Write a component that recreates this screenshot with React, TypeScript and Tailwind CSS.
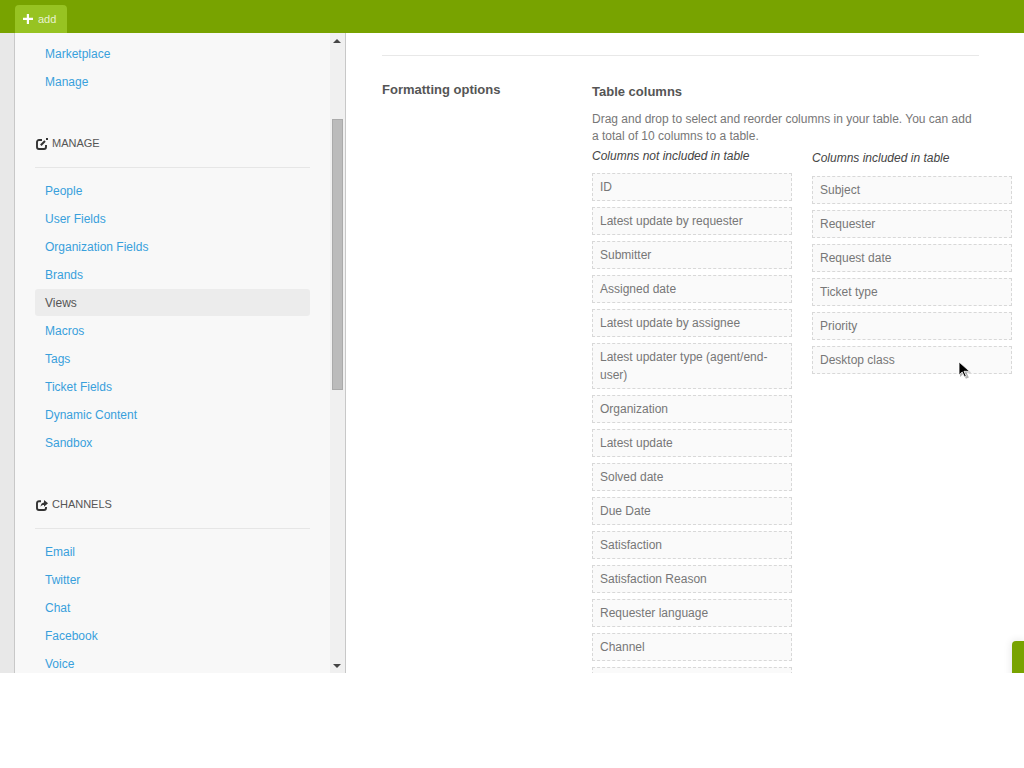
const adminLinks = ['Marketplace', 'Manage']
const manageLinks = ['People', 'User Fields', 'Organization Fields', 'Brands', 'Views', 'Macros', 'Tags', 'Ticket Fields', 'Dynamic Content', 'Sandbox']
const channelLinks = ['Email', 'Twitter', 'Chat', 'Facebook', 'Voice']

const available = [
	'ID',
	'Latest update by requester',
	'Submitter',
	'Assigned date',
	'Latest update by assignee',
	'Latest updater type (agent/end-user)',
	'Organization',
	'Latest update',
	'Solved date',
	'Due Date',
	'Satisfaction',
	'Satisfaction Reason',
	'Requester language',
	'Channel',
]
const selected = ['Subject', 'Requester', 'Request date', 'Ticket type', 'Priority', 'Desktop class']

const NavList = ({ items }: { items: string[] }) => (
	<ul className="ml-5 w-[275px]">
		{items.map((item) =>
			item === 'Views' ? (
				<li key={item} className="flex h-7 items-start">
					<span className="flex h-[27px] w-full items-center rounded-[3px] bg-[#ececec] pl-2.5 pt-[1px] text-[#555]">{item}</span>
				</li>
			) : (
				<li key={item} className="flex h-7 items-center pl-2.5 text-[#38a0dc]">
					{item}
				</li>
			),
		)}
	</ul>
)

const ColumnItem = ({ label }: { label: string }) => (
	<li className="w-[200px] border border-dashed border-[#d8d8d8] bg-[#fafafa] px-[7px] py-[4px] leading-[18px] text-[#777]">{label}</li>
)

const EditIcon = () => (
	<svg className="mr-[4px] mt-[2px]" width="12" height="12" viewBox="0 0 12 12" fill="none">
		<path d="M6 2H3a2 2 0 0 0-2 2v5a2 2 0 0 0 2 2h5a2 2 0 0 0 2-2V7" stroke="#333" strokeWidth="1.9" />
		<path d="M4.8 7.2 9 3" stroke="#333" strokeWidth="2" />
		<rect x="10" y="0" width="2" height="2" fill="#333" />
	</svg>
)

const ShareIcon = () => (
	<svg className="mr-[4px] mt-[2px]" width="12" height="12" viewBox="0 0 12 12" fill="none">
		<path d="M5 2.2H3a2 2 0 0 0-2 2V9a2 2 0 0 0 2 2h5a2 2 0 0 0 2-2V8" stroke="#333" strokeWidth="1.9" />
		<path d="M8 1l4 3.3L8 7.8V6C6.2 6 5.2 6.6 4.6 8c0-3 1.3-4.4 3.4-4.6z" fill="#333" />
	</svg>
)

export default function App() {
	return (
		<div className="relative h-[673px] overflow-hidden bg-white font-['Liberation_Sans',sans-serif] text-xs">
			<header className="flex h-[33px] items-end bg-[#78a300] pl-[15px]">
				<div className="flex h-7 w-[52px] items-center rounded-t-[4px] bg-[#97c322] pl-2 text-[11px] text-[#e8f2cf]">
					<svg className="mr-[5px]" width="10" height="10" viewBox="0 0 11 11">
						<path d="M4.2 0h2.4v4.2H11v2.4H6.6V11H4.2V6.6H0V4.2h4.2z" fill="#fff" />
					</svg>
					add
				</div>
			</header>

			<div className="flex h-[640px]">
				<aside className="flex w-[346px] shrink-0 border-r border-[#c8c8c8] bg-[#e8e8e8] pl-[14px]">
					<div className="h-full w-[316px] border-l border-[#c8c8c8] bg-[#f8f8f8] pt-[7px]">
						<NavList items={adminLinks} />
						<div className="mt-10 ml-[21px] flex h-[14px] items-center text-[11px] text-[#555]">
							<EditIcon />
							MANAGE
						</div>
						<div className="mt-[17px] mb-[9px] ml-5 h-px w-[275px] bg-[#e6e6e6]" />
						<NavList items={manageLinks} />
						<div className="mt-10 ml-[21px] flex h-[14px] items-center text-[11px] text-[#555]">
							<ShareIcon />
							CHANNELS
						</div>
						<div className="mt-[17px] mb-[9px] ml-5 h-px w-[275px] bg-[#e6e6e6]" />
						<NavList items={channelLinks} />
					</div>
					<div className="flex h-full w-[15px] flex-col items-center bg-[#f0f0f0]">
						<div className="mt-[6px] -ml-px h-0 w-0 border-x-[4px] border-b-[4px] border-x-transparent border-b-[#444]" />
						<div className="mt-[76px] h-[271px] w-[11px] border border-[#aaa] bg-[#bbb]" />
						<div className="mt-[274px] -ml-px h-0 w-0 border-x-[4px] border-t-[4px] border-x-transparent border-t-[#444]" />
					</div>
				</aside>

				<main className="min-w-0 flex-1 pl-9 text-[#777]">
					<div className="mt-[22px] h-px w-[597px] bg-[#e8e8e8]" />
					<div className="mt-[26px] flex">
						<h2 className="w-[210px] shrink-0 text-[13px] leading-[15px] font-bold text-[#555]">Formatting options</h2>
						<div className="w-[400px] shrink-0 pt-[2px]">
							<h3 className="text-[13px] leading-[15px] font-bold text-[#555]">Table columns</h3>
							<p className="mt-[12px] w-[385px] leading-[17px]">
								Drag and drop to select and reorder columns in your table. You can add a total of 10 columns to a table.
							</p>
							<div className="mt-[1px] flex gap-5">
								<div>
									<div className="h-[27px] leading-[20px] text-[#444] italic">Columns not included in table</div>
									<ul className="flex flex-col gap-[6px]">
										{available.map((label) => (
											<ColumnItem key={label} label={label} />
										))}
										<li className="h-7 w-[200px] border border-dashed border-[#d8d8d8] bg-[#fafafa]" />
									</ul>
								</div>
								<div className="pt-[2px]">
									<div className="h-[28px] leading-[20px] text-[#444] italic">Columns included in table</div>
									<ul className="flex flex-col gap-[6px]">
										{selected.map((label) => (
											<ColumnItem key={label} label={label} />
										))}
									</ul>
								</div>
							</div>
						</div>
					</div>
				</main>
			</div>

			{/* floating help tab */}
			<div className="absolute top-[641px] left-[1012px] h-10 w-3 rounded-tl-[4px] bg-[#78a300] shadow-[0_0_8px_rgba(0,0,0,0.12)]" />

			{/* mouse pointer */}
			<svg className="absolute top-[360px] left-[957px]" width="16" height="20" viewBox="0 0 16 20">
				<path d="M3 3v14l3.5-3.2 2.4 5 3-1.2-2.4-5H14z" fill="#000" opacity="0.3" />
				<path d="M2 2v13l3.2-3 2.3 5 1.8-.8-2.3-4.9H12.5z" fill="#000" stroke="#fff" strokeWidth="0.8" />
			</svg>
		</div>
	)
}
